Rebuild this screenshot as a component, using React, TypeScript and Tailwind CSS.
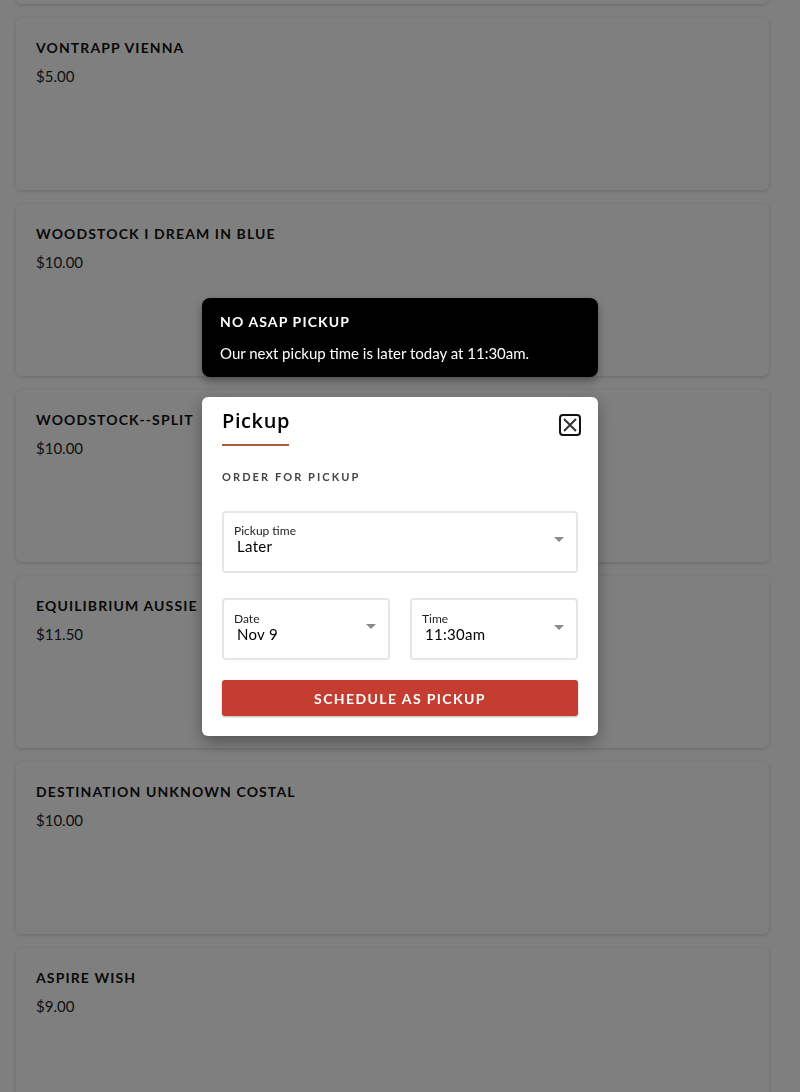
import React from "react";

const items = [
  { name: "", price: "" },
  { name: "VONTRAPP VIENNA", price: "$5.00" },
  { name: "WOODSTOCK I DREAM IN BLUE", price: "$10.00" },
  { name: "WOODSTOCK--SPLIT", price: "$10.00" },
  { name: "EQUILIBRIUM AUSSIE", price: "$11.50" },
  { name: "DESTINATION UNKNOWN COSTAL", price: "$10.00" },
  { name: "ASPIRE WISH", price: "$9.00" },
];

function Caret() {
  return (
    <svg width="10" height="5" viewBox="0 0 10 5" className="shrink-0">
      <path d="M0 0 L10 0 L5 5 Z" fill="#8a8a8a" />
    </svg>
  );
}

function SelectBox({ label, value, boxClass = "" }: { label: string; value: string; boxClass?: string }) {
  return (
    <div className={"h-[62px] border-2 border-[#e6e6e6] rounded-[4px] flex items-center pl-[10px] pr-[12px] " + boxClass}>
      <div className="flex-1 flex flex-col">
        <div className="text-[12px] leading-[14px] text-[#222]">{label}</div>
        <div className="text-[15px] leading-[16px] text-black pl-[3px] tracking-[0.02em]">{value}</div>
      </div>
      <Caret />
    </div>
  );
}

export default function App() {
  return (
    <div className="relative min-h-[1092px] bg-white overflow-hidden" style={{ fontFamily: "Lato, 'Noto Sans', sans-serif" }}>
      <div className="px-[16px] pr-[31px] -mt-[168px] flex flex-col gap-[14px]">
        {items.map((it, i) => (
          <div key={i} className="h-[172px] bg-white rounded-[6px] shadow-[0_1px_4px_rgba(0,0,0,0.18)] px-[20px] pt-[21px]">
            {it.name && (
              <>
                <div className="text-[14px] leading-[18px] font-bold tracking-[0.08em] text-[#111]">{it.name}</div>
                <div className="mt-[10px] text-[15px] leading-[18px] text-[#222]">{it.price}</div>
              </>
            )}
          </div>
        ))}
      </div>

      <div className="fixed inset-0 bg-black/50 flex flex-col items-center pt-[298px]">
        <div className="w-[396px] h-[79px] bg-black rounded-[8px] shadow-[0_4px_10px_rgba(0,0,0,0.35)] px-[18px] pt-[15px]">
          <div className="text-white text-[14px] leading-[18px] font-bold tracking-[0.08em]">NO ASAP PICKUP</div>
          <div className="text-white text-[15px] leading-[18px] mt-[13px]">Our next pickup time is later today at 11:30am.</div>
        </div>

        <div className="mt-[20px] w-[396px] h-[339px] bg-white rounded-[6px] shadow-[0_6px_16px_rgba(0,0,0,0.35)] px-[20px] pt-[11px]">
          <div className="flex items-start justify-between">
            <div>
              <div className="text-[20px] leading-[26px] font-semibold tracking-[0.03em] text-black" style={{ fontFamily: "'Open Sans', sans-serif" }}>Pickup</div>
              <div className="mt-[10px] w-[67px] h-[2px] bg-[#a95a43]" />
            </div>
            <svg width="22" height="22" viewBox="0 0 22 22" className="mt-[6px] mr-[-3px]">
              <rect x="1" y="1" width="20" height="20" rx="3" fill="none" stroke="#111" strokeWidth="2" />
              <path d="M5 5 L17 17 M17 5 L5 17" stroke="#333" strokeWidth="2" />
            </svg>
          </div>
          <div className="mt-[24px] text-[11px] leading-[14px] font-bold tracking-[0.19em] text-[#444]">ORDER FOR PICKUP</div>
          <div className="mt-[27px]">
            <SelectBox label="Pickup time" value="Later" boxClass="pb-[6px]" />
          </div>
          <div className="mt-[25px] grid grid-cols-2 gap-[20px]">
            <SelectBox label="Date" value="Nov 9" boxClass="pb-[5px]" />
            <SelectBox label="Time" value="11:30am" boxClass="pb-[4px]" />
          </div>
          <button className="mt-[20px] w-full h-[36px] bg-[#c53d30] rounded-[3px] text-white text-[14px] font-bold tracking-[0.1em] shadow-[0_1px_2px_rgba(0,0,0,0.3)]">
            SCHEDULE AS PICKUP
          </button>
        </div>
      </div>
    </div>
  );
}
